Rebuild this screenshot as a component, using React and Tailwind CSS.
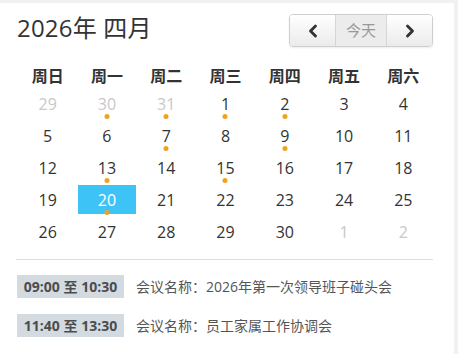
import { ChevronLeft, ChevronRight } from 'lucide-react';

const weekdays = ['周日', '周一', '周二', '周三', '周四', '周五', '周六'];

// [day, inMonth, hasMeeting]
const weeks = [
    [[29, false, false], [30, false, true], [31, false, true], [1, true, true], [2, true, true], [3, true, false], [4, true, false]],
    [[5, true, false], [6, true, false], [7, true, true], [8, true, false], [9, true, true], [10, true, false], [11, true, false]],
    [[12, true, false], [13, true, true], [14, true, false], [15, true, true], [16, true, false], [17, true, false], [18, true, false]],
    [[19, true, false], [20, true, true], [21, true, false], [22, true, false], [23, true, false], [24, true, false], [25, true, false]],
    [[26, true, false], [27, true, false], [28, true, false], [29, true, false], [30, true, false], [1, false, false], [2, false, false]],
];

const meetings = [
    { time: '09:00 至 10:30', name: '2026年第一次领导班子碰头会' },
    { time: '11:40 至 13:30', name: '员工家属工作协调会' },
];

const font = { fontFamily: '"Open Sans", "Noto Sans CJK SC", sans-serif' };

const App = () => (
    <div className="h-[354px] w-[458px] bg-[#f1f1f1] pt-[3px] overflow-hidden" style={font}>
        <div className="h-[351px] w-[454px] bg-white px-[18px]">
            <div className="flex items-start justify-between pt-[11px] pr-[3px]">
                <h1 className="text-[24px] leading-[26px] mt-[1px] text-[#333] -ml-[1px] tracking-[0.2px]">2026年 四月</h1>
                <div className="flex h-[33px] rounded-[4px] border border-[#cfcfcf] shadow-[0_1px_2px_rgba(0,0,0,0.08)] overflow-hidden">
                    <button className="w-[45px] flex items-center justify-center bg-gradient-to-b from-white to-[#ebebeb] text-[#333]">
                        <ChevronLeft size={20} strokeWidth={3.4} />
                    </button>
                    <button className="w-[52px] border-x border-[#d6d6d6] bg-[#ececec] text-[15px] text-[#999]">今天</button>
                    <button className="w-[45px] flex items-center justify-center bg-gradient-to-b from-white to-[#ebebeb] text-[#333]">
                        <ChevronRight size={20} strokeWidth={3.4} />
                    </button>
                </div>
            </div>

            <div className="w-[415px] mt-[15px]">
                <div className="grid grid-cols-7 h-[27px] items-center">
                    {weekdays.map((w) => (
                        <div key={w} className="text-center text-[16px] font-bold text-[#333]">{w}</div>
                    ))}
                </div>
                <div className="grid grid-cols-7 gap-y-[3px]">
                    {weeks.flat().map(([d, inMonth, dot], i) => {
                        const today = inMonth && d === 20;
                        return (
                            <div key={i} className="relative h-[29px] flex items-center justify-center">
                                <div className={`h-full w-[58px] flex items-center justify-center text-[16px] ${today ? 'bg-[#3ec3f6] text-white' : inMonth ? 'text-[#333]' : 'text-[#c8c8c8]'}`}>
                                    {d}
                                </div>
                                {dot && <span className="absolute bottom-[-1px] left-1/2 -translate-x-1/2 w-[5px] h-[5px] rounded-full bg-[#f0a21e]" />}
                            </div>
                        );
                    })}
                </div>
                <div className="mt-[13px] -ml-[2px] w-[417px] border-t border-[#dedede]" />
                <div className="mt-[15px] flex flex-col gap-[16px] -ml-[1px]">
                    {meetings.map((m) => (
                        <div key={m.time} className="flex items-center">
                            <span className="w-[107px] h-[23px] flex items-center justify-center bg-[#d3dbe1] text-[14px] font-bold text-[#4d4d4d]">{m.time}</span>
                            <span className="ml-[12px] text-[14px] text-[#555]">会议名称：{m.name}</span>
                        </div>
                    ))}
                </div>
            </div>
        </div>
    </div>
);

export default App;
